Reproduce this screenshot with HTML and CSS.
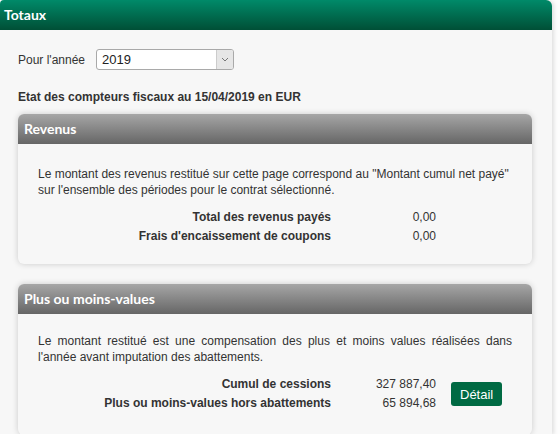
FILE: index.html
```html
<!DOCTYPE html>
<html lang="fr">
<head>
    <meta charset="UTF-8">
    <title>Totaux</title>
    <link rel="stylesheet" href="styles.css">
</head>
<body>
    <div class="panel">
        <div class="panel-title">Totaux</div>
        <div class="panel-body">
            <div class="year-row">
                <label for="year">Pour l'année</label>
                <div class="select">
                    <span class="select-value">2019</span>
                    <span class="select-arrow">
                        <svg width="8" height="5" viewBox="0 0 8 5"><path d="M1 1l3 3 3-3" fill="none" stroke="#777" stroke-width="1"/></svg>
                    </span>
                </div>
            </div>

            <div class="state">Etat des compteurs fiscaux au 15/04/2019 en EUR</div>

            <!-- Revenus -->
            <div class="card">
                <div class="card-title">Revenus</div>
                <div class="card-body">
                    <p class="note">Le montant des revenus restitué sur cette page correspond au "Montant cumul net payé" sur l'ensemble des périodes pour le contrat sélectionné.</p>
                    <div class="totals">
                        <div class="label">Total des revenus payés</div>
                        <div class="value">0,00</div>
                        <div></div>
                        <div class="label">Frais d'encaissement de coupons</div>
                        <div class="value">0,00</div>
                        <div></div>
                    </div>
                </div>
            </div>

            <!-- Plus ou moins-values -->
            <div class="card">
                <div class="card-title">Plus ou moins-values</div>
                <div class="card-body pmv">
                    <p class="note justify">Le montant restitué est une compensation des plus et moins values réalisées dans l'année avant imputation des abattements.</p>
                    <div class="totals">
                        <div class="label">Cumul de cessions</div>
                        <div class="value">327 887,40</div>
                        <div class="action"><button class="btn">Détail</button></div>
                        <div class="label">Plus ou moins-values hors abattements</div>
                        <div class="value">65 894,68</div>
                    </div>
                </div>
            </div>
        </div>
    </div>
</body>
</html>
```

FILE: styles.css
```css
body {
    margin: 0;
    background-color: #fdfdfd;
    font-family: "Liberation Sans", Arial, sans-serif;
    font-size: 12px;
    color: #333;
}
.panel {
    width: 552px;
    min-height: 434px;
    background-color: #f7f7f7;
    border-radius: 4px 6px 0 0;
    box-shadow: 2px 0 4px rgba(0, 0, 0, 0.12);
}
.panel-title {
    height: 30px;
    line-height: 30px;
    padding-left: 4px;
    font-family: Lato, sans-serif;
    font-weight: bold;
    font-size: 14px;
    color: #fff;
    background: linear-gradient(#008a69, #004f36);
    border-radius: 4px 6px 0 0;
}
.panel-body {
    padding: 19px 20px 0 18px;
}
.year-row {
    display: flex;
    align-items: center;
    gap: 11px;
}
.select {
    display: flex;
    width: 136px;
    height: 19px;
    border: 1px solid #a9a9a9;
    border-radius: 3px;
    background-color: #fff;
    font-size: 13px;
}
.select-value {
    flex: 1;
    padding-left: 5px;
    line-height: 19px;
    color: #222;
}
.select-arrow {
    width: 16px;
    display: flex;
    align-items: center;
    justify-content: center;
    background-color: #e6e6e6;
    border-left: 1px solid #ccc;
    border-radius: 0 2px 2px 0;
}
.state {
    margin-top: 20px;
    line-height: 14px;
    font-weight: bold;
}
.card {
    margin-top: 10px;
    width: 514px;
    background-color: #f7f7f7;
    border-radius: 6px;
    box-shadow: 0 0 6px rgba(0, 0, 0, 0.18);
}
.card + .card {
    margin-top: 20px;
}
.card-title {
    height: 30px;
    line-height: 30px;
    padding-left: 6px;
    font-family: Lato, sans-serif;
    font-weight: bold;
    font-size: 14px;
    color: #fff;
    background: linear-gradient(#a6a6a6, #666);
    border-radius: 6px 6px 0 0;
}
.card-body {
    padding: 22px 20px 18px 20px;
}
.card-body.pmv {
    padding-top: 19px;
    padding-bottom: 22px;
}
.note {
    margin: 0;
    line-height: 16px;
}
.justify {
    text-align: justify;
}
.totals {
    display: grid;
    grid-template-columns: 293px 105px auto;
    row-gap: 0;
    margin-top: 10px;
}
.label {
    text-align: right;
    font-weight: bold;
    line-height: 19px;
}
.value {
    text-align: right;
    line-height: 19px;
}
.action {
    grid-row: span 2;
    display: flex;
    align-items: center;
    padding-left: 15px;
}
.btn {
    height: 24px;
    padding: 0 9px;
    border: none;
    border-radius: 3px;
    background-color: #006a43;
    color: #fff;
    font-family: "Liberation Sans", Arial, sans-serif;
    font-size: 13px;
}
```
